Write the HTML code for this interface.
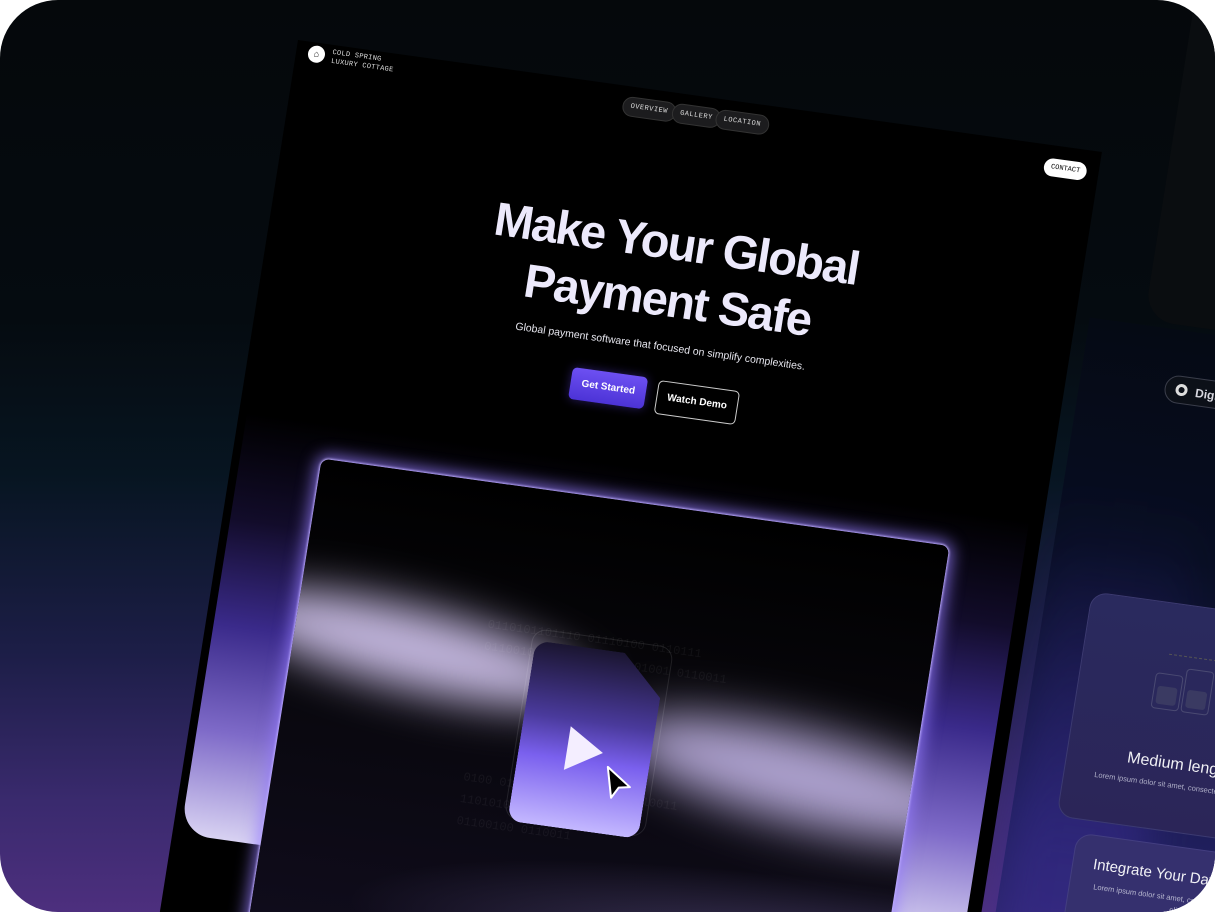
<!DOCTYPE html>
<html><head><meta charset="utf-8"><style>
html,body{margin:0;padding:0;background:#fff;width:1215px;height:912px;overflow:hidden;}
#wrap{position:relative;width:1215px;height:912px;overflow:hidden;border-radius:58px;
background:linear-gradient(180deg,#05080b 0%,#050b10 35%,#071521 52%,#1d1e48 72%,#3a2a6e 88%,#4d2f7e 100%);font-family:"Liberation Sans",sans-serif;}
.plane{position:absolute;left:0;top:0;transform-origin:0 0;transform:matrix(0.990,0.138,-0.157,0.991,298,40);}
#main{position:absolute;left:0;top:0;width:812px;height:1000px;background:#000;overflow:hidden;}
.mono{font-family:"Liberation Mono",monospace;}
.pill{position:absolute;height:18px;line-height:18px;padding:0 7px;border-radius:10px;background:#1c1c1e;border:1px solid #333;color:#ddd;font-size:7px;letter-spacing:.5px;font-family:"Liberation Mono",monospace;}
h1{position:absolute;left:0;width:812px;top:120px;margin:0;text-align:center;color:#ece9fb;font-size:47px;line-height:57px;font-weight:bold;letter-spacing:-1.6px;}
</style></head><body><div id="wrap">
<div class="plane"><div style="position:absolute;left:880px;top:-260px;width:400px;height:420px;background:#0a0d10;border-radius:30px;"></div>
<div style="position:absolute;left:826px;top:165px;width:420px;height:900px;background:linear-gradient(180deg,#050a14 0%,#070d22 25%,#1e1e5a 55%,#35297a 80%,#43308a 100%);">
 <div style="position:absolute;left:0;top:0;width:140px;height:900px;background:linear-gradient(180deg,rgba(0,0,0,0) 20%,rgba(60,45,150,.5) 60%,rgba(80,55,160,.4) 100%);filter:blur(20px)"></div>
 <div style="position:absolute;left:85px;top:45px;width:140px;height:28px;border-radius:15px;border:1px solid #3a3d4a;background:#0c1018;color:#d8d8e0;font-size:12px;line-height:28px;padding-left:30px;box-sizing:border-box;font-weight:bold;">Digital
  <span style="position:absolute;left:10px;top:7px;width:12px;height:12px;border-radius:50%;border:3px solid #ddd;box-sizing:border-box;"></span></div>
 <div style="position:absolute;left:45px;top:270px;width:330px;height:225px;border-radius:16px;background:linear-gradient(180deg,#2a2a5e,#2b2558);border:1px solid #3c3a70;">
  <div style="position:absolute;left:85px;top:50px;width:200px;border-top:1px dashed #555;"></div>
  <div style="position:absolute;left:75px;top:70px;width:26px;height:34px;border:1px solid #4a4a72;border-radius:4px;"><div style="margin:12px 3px 0;height:18px;background:#3a3a62;border-radius:3px"></div></div>
  <div style="position:absolute;left:105px;top:62px;width:26px;height:42px;border:1px solid #4a4a72;border-radius:4px;"><div style="margin:20px 3px 0;height:18px;background:#3a3a62;border-radius:3px"></div></div>
  <div style="position:absolute;left:60px;top:150px;color:#f0f0f5;font-size:16px;">Medium length</div>
  <div style="position:absolute;left:30px;top:175px;color:#b0b0c8;font-size:7.5px;">Lorem ipsum dolor sit amet, consectetur</div>
 </div>
 <div style="position:absolute;left:68px;top:510px;width:330px;height:225px;border-radius:16px;background:#35306e;border:1px solid #433e80;">
  <div style="position:absolute;left:20px;top:20px;color:#f0f0f5;font-size:15px;">Integrate Your Data</div>
  <div style="position:absolute;left:18px;top:45px;color:#b8b8d0;font-size:7.5px;line-height:12px;width:180px;text-align:center;">Lorem ipsum dolor sit amet, consectetur adipiscing elit.</div>
 </div>
</div>
<div id="main">
 <div style="position:absolute;left:12px;top:3px;width:17px;height:17px;border-radius:50%;background:#fff;color:#000;font-size:9px;text-align:center;line-height:17px;">⌂</div>
 <div class="mono" style="position:absolute;left:36px;top:4px;color:#ddd;font-size:7px;line-height:9px;letter-spacing:.3px;">COLD SPRING<br>LUXURY COTTAGE</div>
 <div class="pill" style="left:331px;top:10px;">OVERVIEW</div>
 <div class="pill" style="left:381px;top:10px;">GALLERY</div>
 <div class="pill" style="left:425px;top:10px;">LOCATION</div>
 <div class="mono" style="position:absolute;left:757px;top:13px;height:18px;line-height:18px;padding:0 7px;border-radius:9px;background:#fff;color:#000;font-size:7px;">CONTACT</div>
 <h1>Make Your Global<br>Payment Safe</h1>
 <div style="position:absolute;left:0;width:812px;top:247px;text-align:center;color:#e6e6ee;font-size:10.5px;">Global payment software that focused on simplify complexities.</div>
 <div style="position:absolute;left:323px;top:285px;width:76px;height:32px;border-radius:5px;background:linear-gradient(180deg,#6d50f2,#4c33d6);color:#fff;font-size:10px;line-height:32px;text-align:center;font-weight:bold;box-shadow:0 0 10px rgba(100,70,240,.4)">Get Started</div>
 <div style="position:absolute;left:410px;top:286px;width:80px;height:32px;border-radius:5px;border:1px solid #ccc;color:#fff;font-size:10px;line-height:32px;text-align:center;font-weight:bold;">Watch Demo</div>
 <div style="position:absolute;left:8px;top:375px;width:790px;height:425px;border-radius:0 0 30px 30px;overflow:hidden;background:linear-gradient(180deg,#000 0%,#120c2a 25%,#3a2a8a 50%,#7e6ac8 75%,#d8d2f2 100%);"></div>
 <div style="position:absolute;left:89px;top:410px;width:634px;height:520px;border-radius:8px;background:linear-gradient(180deg,#000 0%,#08070c 40%,#110d1f 100%);box-shadow:0 0 16px 4px rgba(150,125,255,.8),0 0 2px 1px #e8e0ff;overflow:hidden;">
  <div style="position:absolute;left:-60px;top:135px;width:360px;height:80px;border-radius:50%;background:rgba(225,210,255,.85);filter:blur(22px);transform:rotate(6deg);"></div>
  <div style="position:absolute;left:340px;top:205px;width:380px;height:90px;border-radius:50%;background:rgba(215,200,255,.8);filter:blur(24px);transform:rotate(6deg);"></div>
  <div style="position:absolute;left:0;top:330px;width:634px;height:200px;background:radial-gradient(ellipse at 100% 50%,rgba(180,160,255,.35),rgba(0,0,0,0) 60%);"></div>
  <div class="mono" style="position:absolute;left:190px;top:130px;color:rgba(255,255,255,.05);font-size:12px;line-height:22px;">0110101101110 01110100 0110111<br>01100101 01110011 01101001 0110011<br><br><br><br><br><br>0100 01010011 0111001 01110011<br>1101010 01000001 0100001<br>01100100 0110011</div>
  <div style="position:absolute;left:236px;top:138px;width:140px;height:190px;border-radius:14px;border:1px solid rgba(255,255,255,.1);"></div>
  <div style="position:absolute;left:240px;top:150px;width:132px;height:182px;border-radius:14px;clip-path:polygon(0 0,68% 0,100% 22%,100% 100%,0 100%);background:linear-gradient(180deg,#1a1530 0%,#4a3a9c 40%,#7a60ee 62%,#c4b8ff 100%);"></div>
  <div style="position:absolute;left:288px;top:230px;width:0;height:0;border-top:22px solid transparent;border-bottom:22px solid transparent;border-left:36px solid #f4eeff;"></div>
  <svg style="position:absolute;left:328px;top:262px" width="32" height="36" viewBox="0 0 32 36"><path d="M3 3 L28 20 L17 22 L11 33 Z" fill="#000" stroke="#fff" stroke-width="2" stroke-linejoin="round"/></svg>
 </div>
</div>
</div>
</div></body></html>
